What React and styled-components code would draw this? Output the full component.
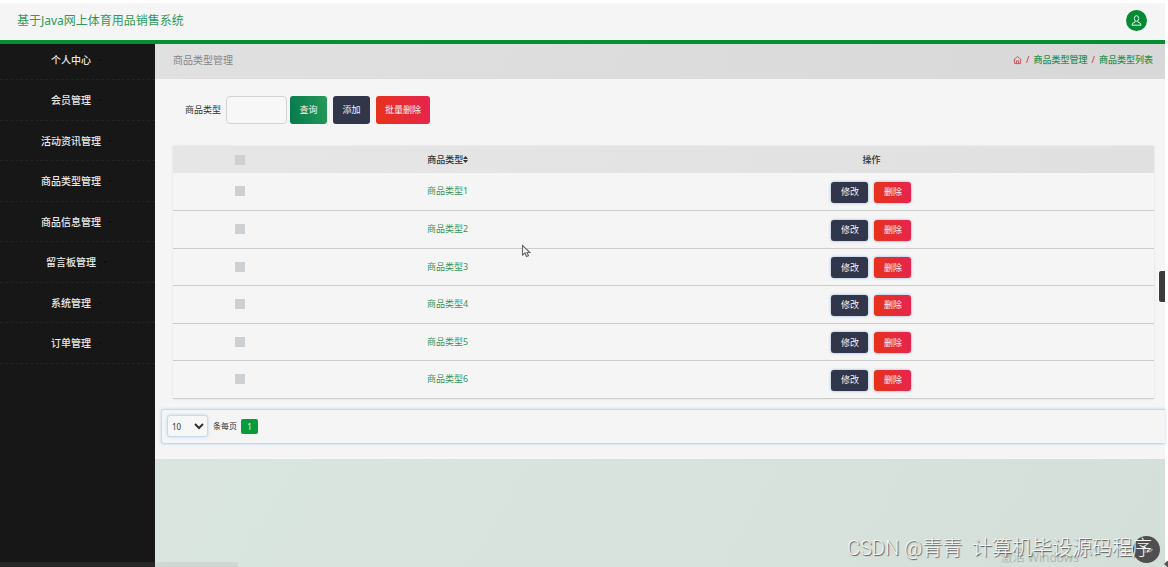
import React from "react";
import styled, { createGlobalStyle, css } from "styled-components";

const GlobalStyle = createGlobalStyle`
  *, *::before, *::after { box-sizing: border-box; }
  body {
    margin: 0;
    background: #fff;
    color: #333;
    font-family: "Noto Sans", "Noto Sans CJK SC", sans-serif;
    font-size: 9px;
    line-height: 16px;
  }
  button, input, select { font: inherit; margin: 0; }
  a { color: inherit; text-decoration: none; }
`;

const Page = styled.div`
  position: relative;
  display: flex;
  flex-direction: column;
  min-height: 100vh;
  padding: 3px 3px 0 0;
  overflow: hidden;
`;

const Header = styled.header`
  display: flex;
  align-items: center;
  justify-content: space-between;
  height: 41px;
  padding: 0 18px 3px 17px;
  background: #f5f5f5;
  border-bottom: 4px solid #058f35;
`;

const SiteTitle = styled.h1`
  margin: 0;
  padding-top: 2px;
  font-size: 12px;
  line-height: 20px;
  font-weight: 400;
  color: #2f9a58;
`;

const AvatarButton = styled.button`
  display: flex;
  align-items: center;
  justify-content: center;
  width: 21px;
  height: 21px;
  padding: 0;
  border: 0;
  border-radius: 50%;
  background: #048a32;
  color: #e5f5ea;
`;

const Body = styled.div`
  display: flex;
  flex: 1;
`;

const Sidebar = styled.nav`
  flex: 0 0 155px;
  background: #171717;
`;

const MenuList = styled.ul`
  margin: 0;
  padding: 0;
  list-style: none;
`;

const MenuItem = styled.li`
  height: 40px;
  border-bottom: 1px dashed #22222b;

  &:nth-child(even) { height: 41px; }
  &:first-child { height: 36px; padding-bottom: 3px; }
`;

const MenuLink = styled.a`
  display: flex;
  align-items: center;
  justify-content: center;
  gap: 6px;
  height: 100%;
  padding-right: 1px;
  font-size: 10px;
  font-weight: 500;
  color: #e8e8e8;

  svg { color: #0b0b0b; }
`;

const Main = styled.main`
  flex: 1;
  min-width: 0;
  background: linear-gradient(120deg, #dae6e0 0%, #d8e4dd 45%, #d4dfd9 100%);
`;

const Panel = styled.section`
  padding-bottom: 15px;
  background: #f5f5f5;
`;

const PanelHead = styled.div`
  display: flex;
  align-items: center;
  justify-content: space-between;
  height: 35px;
  padding: 0 12px 4px 18px;
  background: linear-gradient(100deg, #e0e0e0, #d8d8d8);
`;

const PanelTitle = styled.h2`
  margin: 0;
  font-size: 10px;
  font-weight: 400;
  color: #858585;
`;

const Breadcrumb = styled.nav`
  display: flex;
  align-items: center;
  gap: 4px;
  color: #2c9150;
  font-weight: 500;
`;

const HomeLink = styled.a`
  display: flex;
  color: #cf4550;
`;

const Slash = styled.span`
  color: #d8404d;
`;

const SearchForm = styled.form`
  display: flex;
  align-items: center;
  gap: 6px;
  padding: 17px 18px 0 30px;
`;

const Field = styled.label`
  display: flex;
  align-items: center;
  gap: 5px;
`;

const SearchGroup = styled.div`
  display: flex;
  gap: 3px;
`;

const TextInput = styled.input`
  width: 61px;
  height: 28px;
  padding: 0 6px;
  border: 1px solid #d4d4d4;
  border-radius: 4px;
  background: #f7f7f7;
`;

const tones = {
  green: "linear-gradient(80deg, #05794c, #259a58)",
  navy: "#31364a",
  red: "linear-gradient(80deg, #e73318, #e62450)",
};

const Button = styled.button`
  min-width: 37px;
  height: 28px;
  padding: 0 9px;
  border: 0;
  border-radius: 3px;
  background: ${({ $tone }) => tones[$tone]};
  color: #f3f3f3;
  white-space: nowrap;

  ${({ $small }) =>
    $small &&
    css`
      height: 21px;
      box-shadow: 0 0 3px #8fb4de;
    `}
`;

const TableWrap = styled.div`
  margin: 22px 11px 0 18px;
  box-shadow: 0 0 2px #dedede;
`;

const Table = styled.table`
  width: 100%;
  table-layout: fixed;
  border-collapse: collapse;
  text-align: center;

  th, td { padding: 0; }
`;

const CheckCol = styled.col`
  width: 13.6%;
`;

const TypeCol = styled.col`
  width: 28.8%;
`;

const HeadRow = styled.tr`
  height: 27px;
  background: linear-gradient(100deg, #e6e6e6, #e0e0e0);

  th { font-weight: 500; }
`;

const DataRow = styled.tr`
  height: 37px;
  border-bottom: 1px solid #cbcdcd;

  &:nth-child(even) { height: 38px; }
`;

const TypeCell = styled.td`
  color: #35965a;
`;

const SortLabel = styled.span`
  display: inline-flex;
  align-items: center;
`;

const CheckBox = styled.input`
  display: block;
  appearance: none;
  width: 10px;
  height: 10px;
  margin: 0 auto;
  background: #cdd0d2;
`;

const Actions = styled.div`
  display: flex;
  justify-content: center;
  gap: 6px;
  padding-top: 2px;
`;

const Pagination = styled.div`
  display: flex;
  align-items: center;
  gap: 4px;
  height: 35px;
  margin: 10px 0 0 6px;
  padding: 0 5px;
  border: 1px solid #c5dcf0;
  border-right: 0;
  border-radius: 3px 0 0 3px;
  box-shadow: 0 0 3px #b8d4ee;
`;

const PageSize = styled.label`
  display: flex;
  align-items: center;
  gap: 5px;
  font-size: 8px;
`;

const PageSelect = styled.select`
  width: 41px;
  height: 22px;
  padding: 0;
  border: 1px solid #c5dcf0;
  border-radius: 3px;
  background-color: #f7f7f7;
  color: #333;
  box-shadow: 0 0 3px #b8d4ee;
`;

const PageButton = styled.button`
  width: 17px;
  height: 15px;
  padding: 0;
  border: 0;
  border-radius: 2px;
  background: #089b3c;
  color: #e8f7ec;
  font-size: 8px;
  line-height: 15px;
`;

const DrawerTab = styled.button`
  position: absolute;
  top: 271px;
  right: 3px;
  width: 6px;
  height: 31px;
  padding: 0;
  border: 0;
  border-radius: 2px 0 0 2px;
  background: #3b3d3d;
  box-shadow: 0 0 0 1px #fff;
`;

const Pointer = styled.svg`
  position: absolute;
  top: 244px;
  left: 521px;
`;

const StatusStrip = styled.div`
  position: absolute;
  bottom: 0;
  left: 0;
  width: 238px;
  height: 5px;
  background: rgba(150, 145, 145, 0.14);
`;

const ActivateNote = styled.div`
  position: absolute;
  right: 89px;
  bottom: 0;
  font-size: 12px;
  line-height: 18px;
  color: #b0b9b4;
  white-space: nowrap;
`;

const FloatButton = styled.button`
  position: absolute;
  right: 8px;
  bottom: 4px;
  display: flex;
  align-items: center;
  justify-content: center;
  width: 27px;
  height: 27px;
  padding: 0;
  border: 0;
  border-radius: 50%;
  background: #504e50;
  color: #cfc8cc;
`;

const Watermark = styled.div`
  position: absolute;
  right: 16px;
  bottom: 5px;
  font-family: Roboto, "Noto Sans CJK SC", sans-serif;
  font-size: 20px;
  line-height: 28px;
  font-weight: 300;
  color: #f4f7f5;
  text-shadow: 1px 1px 1px #555;
  white-space: pre;
`;

const CornerMark = styled.svg`
  position: absolute;
  right: 0;
  bottom: 0;
`;

const UserIcon = () => (
  <svg width="13" height="13" viewBox="0 0 13 13" fill="none" stroke="currentColor" strokeWidth="1" aria-hidden="true">
    <ellipse cx="6.5" cy="4.5" rx="2.2" ry="2.8" />
    <path d="M5.2 7.2 5 8.2 2.7 9.2 2 11.2H11L10.3 9.2 8 8.2 7.8 7.2" strokeLinejoin="round" />
  </svg>
);

const HomeIcon = () => (
  <svg width="9" height="10" viewBox="0 0 10 10" fill="none" stroke="currentColor" strokeWidth="1" aria-hidden="true">
    <path d="M.8 4.9 5 1.1 9.2 4.9M1.8 4.2V9H8.2V4.2M3.8 9V6H6.2V9" strokeLinejoin="round" />
  </svg>
);

const CaretIcon = () => (
  <svg width="6" height="4" viewBox="0 0 6 4" fill="currentColor" aria-hidden="true">
    <path d="M1 1H5L3 3Z" />
  </svg>
);

const SortIcon = () => (
  <svg width="5" height="7" viewBox="0 0 5 7" fill="#333" aria-hidden="true">
    <path d="M0 3 2.5 0 5 3ZM0 4 2.5 7 5 4Z" />
  </svg>
);

const ToolIcon = () => (
  <svg width="12" height="10" viewBox="0 0 12 10" fill="none" stroke="currentColor" strokeWidth="1.2" aria-hidden="true">
    <path d="M1 2.5 4 1.5V8M6 7.5 7.5 3.5 11 4.5 9 6.8 6 5.5" />
  </svg>
);

const menu = [
  "个人中心",
  "会员管理",
  "活动资讯管理",
  "商品类型管理",
  "商品信息管理",
  "留言板管理",
  "系统管理",
  "订单管理",
];

const types = ["商品类型1", "商品类型2", "商品类型3", "商品类型4", "商品类型5", "商品类型6"];

export default function App() {
  return (
    <Page>
      <GlobalStyle />
      <Header>
        <SiteTitle>基于Java网上体育用品销售系统</SiteTitle>
        <AvatarButton type="button" aria-label="个人中心">
          <UserIcon />
        </AvatarButton>
      </Header>

      <Body>
        <Sidebar>
          <MenuList>
            {menu.map((name) => (
              <MenuItem key={name}>
                <MenuLink href="#">
                  {name}
                  <CaretIcon />
                </MenuLink>
              </MenuItem>
            ))}
          </MenuList>
        </Sidebar>

        <Main>
          <Panel>
            <PanelHead>
              <PanelTitle>商品类型管理</PanelTitle>
              <Breadcrumb>
                <HomeLink href="#" aria-label="首页">
                  <HomeIcon />
                </HomeLink>
                <Slash>/</Slash>
                <a href="#">商品类型管理</a>
                <Slash>/</Slash>
                <a href="#">商品类型列表</a>
              </Breadcrumb>
            </PanelHead>

            <SearchForm onSubmit={(e) => e.preventDefault()}>
              <SearchGroup>
                <Field>
                  商品类型
                  <TextInput type="text" />
                </Field>
                <Button $tone="green" type="submit">查询</Button>
              </SearchGroup>
              <Button $tone="navy" type="button">添加</Button>
              <Button $tone="red" type="button">批量删除</Button>
            </SearchForm>

            <TableWrap>
              <Table>
                <colgroup>
                  <CheckCol />
                  <TypeCol />
                  <col />
                </colgroup>
                <thead>
                  <HeadRow>
                    <th>
                      <CheckBox type="checkbox" aria-label="全选" />
                    </th>
                    <th>
                      <SortLabel>
                        商品类型
                        <SortIcon />
                      </SortLabel>
                    </th>
                    <th>操作</th>
                  </HeadRow>
                </thead>
                <tbody>
                  {types.map((name) => (
                    <DataRow key={name}>
                      <td>
                        <CheckBox type="checkbox" aria-label={name} />
                      </td>
                      <TypeCell>{name}</TypeCell>
                      <td>
                        <Actions>
                          <Button $tone="navy" $small type="button">修改</Button>
                          <Button $tone="red" $small type="button">删除</Button>
                        </Actions>
                      </td>
                    </DataRow>
                  ))}
                </tbody>
              </Table>
            </TableWrap>

            <Pagination>
              <PageSize>
                <PageSelect defaultValue="10">
                  <option value="10">10</option>
                  <option value="20">20</option>
                  <option value="50">50</option>
                </PageSelect>
                条每页
              </PageSize>
              <PageButton type="button">1</PageButton>
            </Pagination>
          </Panel>
        </Main>
      </Body>

      <DrawerTab type="button" aria-label="展开" />
      <StatusStrip />
      <ActivateNote>激活 Windows</ActivateNote>
      <FloatButton type="button" aria-label="工具">
        <ToolIcon />
      </FloatButton>
      <Watermark>{"CSDN @青青  计算机毕设源码程序"}</Watermark>
      <CornerMark width="4" height="6" viewBox="0 0 4 6" aria-hidden="true">
        <path d="M0 3 3 0H4V6H3Z" fill="#555" />
      </CornerMark>
      <Pointer width="10" height="14" viewBox="0 0 10 14" aria-hidden="true">
        <path d="M1.5 1.5V11L4 9 5.5 12.5 7.5 11.7 6 8.5H9Z" fill="#f5f5f5" stroke="#666" strokeWidth="1.1" />
      </Pointer>
    </Page>
  );
}
